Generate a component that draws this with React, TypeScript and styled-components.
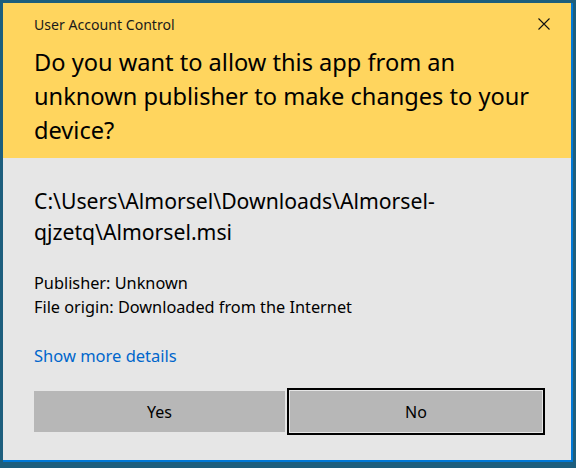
import { createGlobalStyle } from "styled-components";
import styled from "styled-components";

const GlobalStyle = createGlobalStyle`
  html, body {
    margin: 0;
    padding: 0;
    background: #1d5e7d;
  }
  body {
    font-family: "Noto Sans", "Open Sans", sans-serif;
  }
`;

const Desktop = styled.div`
  width: 576px;
  height: 468px;
  padding: 3px 3px 6px 3px;
  box-sizing: border-box;
`;

const Window = styled.div`
  width: 570px;
  height: 459px;
  box-sizing: border-box;
  border-right: 2px solid #0078d7;
  border-bottom: 2px solid #0078d7;
  background: #e6e6e6;
  display: flex;
  flex-direction: column;
`;

const Header = styled.div`
  background: #ffd55e;
  height: 155px;
  box-sizing: border-box;
  padding: 12px 0 0 31px;
  position: relative;
`;

const Caption = styled.div`
  font-size: 14.1px;
  line-height: 20px;
  color: #1a1a1a;
`;

const CloseButton = styled.button`
  position: absolute;
  top: 14px;
  right: 20px;
  width: 14px;
  height: 14px;
  padding: 0;
  border: none;
  background: transparent;
  display: flex;
  align-items: center;
  justify-content: center;
`;

const Question = styled.div`
  margin-top: 10px;
  font-size: 23.6px;
  line-height: 34px;
  color: #000;
  width: 510px;
`;

const Body = styled.div`
  flex: 1;
  display: flex;
  flex-direction: column;
  padding: 27px 26px 0 31px;
`;

const Path = styled.div`
  font-size: 21.2px;
  line-height: 31px;
  color: #000;
  width: 440px;
`;

const Details = styled.div`
  margin-top: 24px;
  font-size: 16.3px;
  line-height: 24px;
  color: #000;
`;

const MoreLink = styled.a`
  margin-top: 25px;
  font-size: 16.5px;
  line-height: 24px;
  color: #0066cc;
  text-decoration: none;
  align-self: flex-start;
`;

const Buttons = styled.div`
  margin-top: 20px;
  display: flex;
  align-items: center;
  gap: 2px;
`;

const Button = styled.button<{ $focused?: boolean }>`
  font-family: inherit;
  font-size: 16px;
  color: #000;
  background: #b7b7b7;
  padding: 0;
  box-sizing: border-box;
  ${({ $focused }) =>
    $focused
      ? `
    width: 258px;
    height: 47px;
    border: 2px solid #000;
    box-shadow: inset 0 0 0 1px #e6e6e6;
  `
      : `
    width: 251px;
    height: 41px;
    border: none;
  `}
`;

export default function App() {
  return (
    <>
      <GlobalStyle />
      <Desktop>
        <Window>
          <Header>
            <Caption>User Account Control</Caption>
            <CloseButton aria-label="Close">
              <svg width="12" height="12" viewBox="0 0 12 12">
                <path d="M0.5 0.5 L11.5 11.5 M11.5 0.5 L0.5 11.5" stroke="#111" strokeWidth="1.1" />
              </svg>
            </CloseButton>
            <Question>
              Do you want to allow this app from an unknown publisher to make
              changes to your device?
            </Question>
          </Header>
          <Body>
            <Path>
              C:\Users\Almorsel\Downloads\Almorsel-
              <br />
              qjzetq\Almorsel.msi
            </Path>
            <Details>
              Publisher: Unknown
              <br />
              File origin: Downloaded from the Internet
            </Details>
            <MoreLink href="#">Show more details</MoreLink>
            <Buttons>
              <Button>Yes</Button>
              <Button $focused>No</Button>
            </Buttons>
          </Body>
        </Window>
      </Desktop>
    </>
  );
}
